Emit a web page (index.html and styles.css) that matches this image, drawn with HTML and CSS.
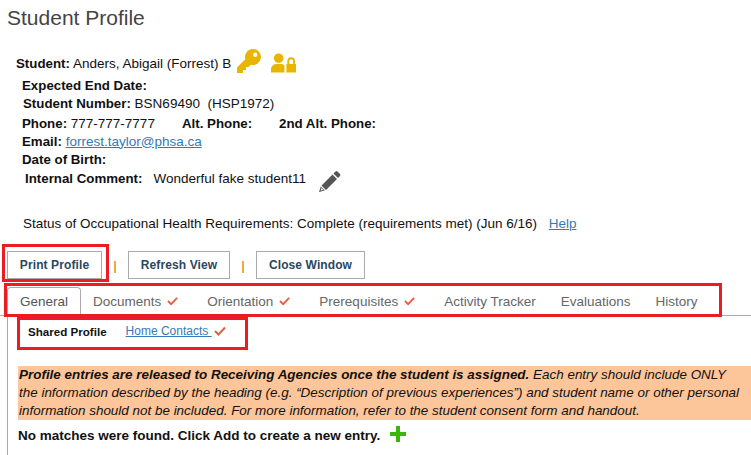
FILE: index.html
```html
<!DOCTYPE html>
<html lang="en">

<head>
    <meta charset="UTF-8">
    <meta name="viewport" content="width=device-width, initial-scale=1.0">
    <title>Student Profile</title>
    <link rel="stylesheet" href="styles.css">
</head>

<body>
    <h1 class="page-title">Student Profile</h1>

    <div class="student-info">
        <div class="row row-student">
            <span><b>Student:</b> Anders, Abigail (Forrest) B</span>
            <svg class="icon-key" viewBox="0 0 24 24"><path fill="#e8b500" d="M16 0a8 8 0 0 0-7.700 10.200L0 18.500V24h6v-3h3v-3h2.500l2.300-2.300A8 8 0 1 0 16 0zm2.200 3.600a2.200 2.200 0 1 1 0 4.400 2.200 2.200 0 0 1 0-4.400z"/></svg>
            <svg class="icon-lock" viewBox="0 0 26 20"><circle cx="8" cy="5" r="5" fill="#e8b500"/><path fill="#e8b500" d="M0 20v-3c0-4 3-6 6-6h4c1.500 0 3 .5 4 1.500V20zM16 20V11h1v-3a4 4 0 0 1 8 0v3h1v9zM19 11h4V8a2 2 0 0 0-4 0z"/></svg>
        </div>
        <div class="row row-end"><b>Expected End Date:</b></div>
        <div class="row row-number"><span><b>Student Number:</b> BSN69490 &nbsp;(HSP1972)</span></div>
        <div class="row row-phone">
            <span class="phone-main"><b>Phone:</b> 777-777-7777</span>
            <b class="phone-alt">Alt. Phone:</b>
            <b>2nd Alt. Phone:</b>
        </div>
        <div class="row row-email"><span><b>Email:</b> <a href="#">forrest.taylor@phsa.ca</a></span></div>
        <div class="row row-birth"><b>Date of Birth:</b></div>
        <div class="row row-comment">
            <b>Internal Comment:</b>
            <span class="comment-text">Wonderful fake student11</span>
            <svg class="icon-pencil" viewBox="0 0 22 22"><path fill="#555" d="M16.500 1.500a1.500 1.500 0 0 1 2 0l2.500 2.500a1.500 1.500 0 0 1 0 2l-2 2-4.500-4.500zM13.500 4.500l4.500 4.500L7 20l-4.500-4.500z"/><path fill="#555" d="M1.800 16.500l4 4L0 22z"/><path fill="#fff" d="M2.300 18l2 2-2.600.6z"/></svg>
        </div>
    </div>

    <p class="health-status">Status of Occupational Health Requirements: Complete (requirements met) (Jun 6/16) <a class="help-link" href="#">Help</a></p>

    <div class="button-row">
        <button type="button" class="btn-print">Print Profile</button>
        <span class="sep">|</span>
        <button type="button" class="btn-refresh">Refresh View</button>
        <span class="sep">|</span>
        <button type="button" class="btn-close">Close Window</button>
    </div>

    <ul class="tabs">
        <li class="tab active">General</li>
        <li class="tab">Documents<svg class="check" viewBox="0 0 12 10"><path d="M1 5l3.500 3.500L11 1.500"/></svg></li>
        <li class="tab">Orientation<svg class="check" viewBox="0 0 12 10"><path d="M1 5l3.500 3.500L11 1.500"/></svg></li>
        <li class="tab">Prerequisites<svg class="check" viewBox="0 0 12 10"><path d="M1 5l3.500 3.500L11 1.500"/></svg></li>
        <li class="tab">Activity Tracker</li>
        <li class="tab">Evaluations</li>
        <li class="tab">History</li>
    </ul>

    <div class="tab-content">
        <div class="sub-tabs">
            <b>Shared Profile</b>
            <a href="#">Home Contacts&nbsp;</a>
            <svg class="check" viewBox="0 0 12 10"><path d="M1 5l3.500 3.500L11 1.500"/></svg>
        </div>

        <p class="notice"><b>Profile entries are released to Receiving Agencies once the student is assigned.</b> Each entry should include ONLY the information described by the heading (e.g. “Description of previous experiences”) and student name or other personal information should not be included. For more information, refer to the student consent form and handout.</p>

        <div class="no-matches">
            <b>No matches were found. Click Add to create a new entry.</b>
            <svg class="icon-plus" viewBox="0 0 16 16"><path fill="#3cb50c" d="M6 0h4v6h6v4h-6v6H6v-6H0V6h6z"/></svg>
        </div>
    </div>

    <!-- red annotation boxes drawn over the screenshot -->
    <div class="mark mark-print"></div>
    <div class="mark mark-tabs"></div>
    <div class="mark mark-sub"></div>
</body>

</html>
```

FILE: styles.css
```css
html, body {
    height: 455px;
    overflow: hidden;
}

body {
    font-family: "Liberation Sans", Arial, sans-serif;
    font-size: 13.5px;
    color: #111;
    background: #fff;
    margin: 0;
    position: relative;
}

a {
    color: #337ab7;
}

.page-title {
    font-size: 21px;
    font-weight: normal;
    color: #444;
    line-height: 24px;
    margin: 0;
    padding: 6px 0 0 7px;
}

.student-info {
    padding-top: 21px;
}

.student-info b {
    font-size: 13.3px;
}

.row {
    display: flex;
    align-items: center;
    white-space: pre-wrap;
    height: 18px;
}

.row-student {
    padding-left: 16px;
    height: 24px;
}

.row-end {
    padding-left: 22px;
    margin-top: 1px;
}

.row-number {
    padding-left: 23px;
}

.row-phone {
    padding-left: 22px;
    margin-top: 2px;
}

.row-email {
    padding-left: 22px;
}

.row-birth {
    padding-left: 22px;
}

.row-comment {
    padding-left: 25px;
    margin-top: 1px;
}

.phone-main {
    width: 160px;
}

.phone-alt {
    width: 97px;
}

.comment-text {
    margin-left: 11px;
}

.icon-key {
    width: 24px;
    height: 24px;
    margin-left: 6px;
    margin-top: -5px;
}

.icon-lock {
    width: 25px;
    height: 20px;
    margin-left: 10px;
    margin-top: -1px;
}

.icon-pencil {
    width: 22px;
    height: 22px;
    margin-left: 13px;
    margin-top: 6px;
}

.health-status {
    margin: 28px 0 0;
    padding-left: 23px;
    line-height: 18px;
}

.help-link {
    margin-left: 8px;
}

.button-row {
    display: flex;
    align-items: center;
    margin-top: 18px;
    padding-left: 7px;
    height: 28px;
}

.button-row button {
    font-family: inherit;
    font-size: 12px;
    font-weight: bold;
    letter-spacing: 0.1px;
    color: #2a475e;
    background: #fff;
    border: 1px solid #aaa;
    height: 28px;
    padding: 0;
}

.btn-print {
    width: 95px;
}

.btn-refresh {
    width: 102px;
}

.btn-close {
    width: 109px;
}

.sep {
    color: #b8700c;
    width: 26px;
    text-align: center;
}

.tabs {
    display: flex;
    list-style: none;
    margin: 8px 0 0;
    padding: 0 0 0 7px;
    border-bottom: 1px solid #aaa;
    height: 28px;
}

.tab {
    font-size: 13.5px;
    color: #666;
    padding: 0 12.5px;
    line-height: 29px;
    white-space: pre;
}

.tab .check {
    width: 11px;
    margin-right: 4px;
}

.tab.active {
    color: #555;
    background: #fff;
    border: 1px solid #aaa;
    border-bottom: none;
    border-radius: 4px 4px 0 0;
    height: 28px;
    line-height: 28px;
    padding: 0 11.5px 0 12px;
}

.check {
    width: 12px;
    height: 10px;
    margin-left: 6px;
    fill: none;
    stroke: #ef5a45;
    stroke-width: 2;
}

.tab-content {
    margin-left: 7px;
    border-left: 1px solid #aaa;
    height: 140px;
    padding-left: 10px;
}

.sub-tabs {
    display: flex;
    align-items: center;
    font-size: 12px;
    height: 30px;
    padding-left: 10px;
}

.sub-tabs b {
    font-size: 11.6px;
    margin-right: 19px;
}

.sub-tabs .check {
    margin-left: 2px;
}

.notice {
    background: #fdc59a;
    font-style: italic;
    font-size: 13.45px;
    line-height: 18px;
    margin: 20px 0 0;
    padding: 0 4px 0 1px;
    width: 733px;
    box-sizing: border-box;
}

.no-matches {
    display: flex;
    align-items: center;
    font-size: 13.5px;
    height: 30px;
}

.icon-plus {
    width: 16px;
    height: 16px;
    margin-left: 10px;
    margin-top: -2px;
}

.mark {
    position: absolute;
    border: 3px solid #ed1c24;
    box-sizing: border-box;
}

.mark-print {
    left: 2px;
    top: 244px;
    width: 107px;
    height: 38px;
}

.mark-tabs {
    left: 4px;
    top: 283px;
    width: 718px;
    height: 34px;
}

.mark-sub {
    left: 17px;
    top: 317px;
    width: 231px;
    height: 33px;
}
```
